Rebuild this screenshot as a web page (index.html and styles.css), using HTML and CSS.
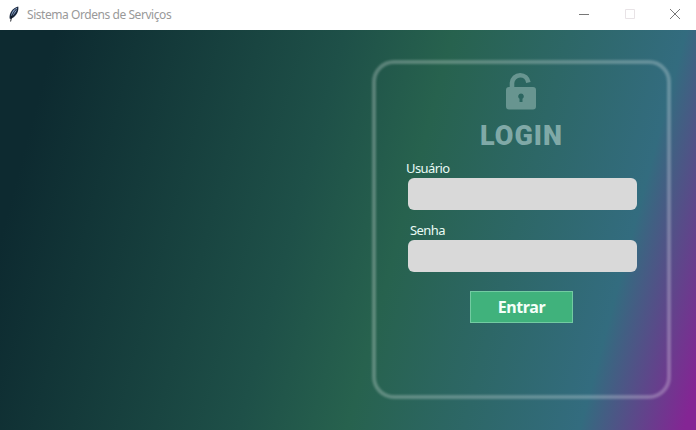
FILE: index.html
```html
<!DOCTYPE html>
<html lang="pt-BR">
<head>
<meta charset="utf-8">
<title>Sistema Ordens de Serviços</title>
<link rel="stylesheet" href="styles.css">
</head>
<body>
<header class="titlebar">
  <svg class="feather" width="12" height="16" viewBox="0 0 12 16">
    <path d="M1.600 12.500C1 7 4.500 2.200 10.200.6c.8 3.200-.9 8.200-4.800 11L2.600 13z" fill="#18253a"/>
    <path d="M3.200 10C3.300 6.500 5.500 3.200 9.200 1.800 9 5 7 7.500 4.800 9.500z" fill="#86a3cc"/>
    <path d="M8.500 3C5.500 6 3.500 9.500 2.600 15.500" fill="none" stroke="#0b0e16" stroke-width=".9"/>
  </svg>
  <h1 class="title">Sistema Ordens de Serviços</h1>
  <div class="controls">
    <svg width="12" height="12" viewBox="0 0 12 12"><path d="M1 6.500h10" stroke="#777"/></svg>
    <svg width="12" height="12" viewBox="0 0 12 12"><path d="M1.500 1.500h9v9h-9z" fill="none" stroke="#e8e3e6"/></svg>
    <svg width="12" height="12" viewBox="0 0 12 12"><path d="M1 1l10 10M11 1L1 11" stroke="#777"/></svg>
  </div>
</header>
<main class="screen">
  <form class="card">
    <svg class="lock" width="32" height="38" viewBox="0 0 32 38">
      <path d="M7 17V11a8.200 8.200 0 0 1 8.200-7.700c4.300 0 7.500 3 8.200 7.200" fill="none" stroke="currentColor" stroke-width="4.600"/>
      <path fill="currentColor" fill-rule="evenodd" d="M4 15h24a3 3 0 0 1 3 3v16.500a3 3 0 0 1-3 3H4a3 3 0 0 1-3-3V18a3 3 0 0 1 3-3zM16 21.500a2.900 2.900 0 0 0-1.500 5.300V30h3v-3.200A2.900 2.900 0 0 0 16 21.500z"/>
    </svg>
    <h2 class="heading">LOGIN</h2>
    <label class="label" for="user">Usuário</label>
    <input class="field" id="user" type="text">
    <label class="label label-password" for="password">Senha</label>
    <input class="field" id="password" type="password">
    <button class="submit" type="button">Entrar</button>
  </form>
</main>
</body>
</html>
```
FILE: styles.css
```css
* { box-sizing: border-box; }
body {
  margin: 0;
  height: 430px;
  display: flex;
  flex-direction: column;
  overflow: hidden;
  font-family: "Noto Sans", sans-serif;
}
.titlebar {
  height: 30px;
  flex: none;
  display: flex;
  align-items: center;
  padding: 0 15px 0 8px;
  background: #fff;
}
.feather { margin-top: -3px; }
.title {
  margin: 0 0 0 7px;
  font-size: 12px;
  font-weight: 400;
  line-height: 30px;
  letter-spacing: -0.44px;
  color: #999;
}
.controls {
  display: flex;
  gap: 33.500px;
  margin-left: auto;
  margin-top: -2px;
}
.controls svg { display: block; }
.screen {
  flex: 1;
  display: flex;
  justify-content: flex-end;
  align-items: flex-start;
  padding: 30px 25px 0 0;
  background: linear-gradient(105deg, #0d2a30 7%, #1e5048 43%, #27624e 56.500%, #336c7f 85.500%, #842594 98.500%);
}
.card {
  position: relative;
  width: 299px;
  height: 339px;
  padding: 12px 34px 0 36px;
  display: flex;
  flex-direction: column;
  align-items: flex-start;
}
.card::before {
  content: "";
  position: absolute;
  inset: 0;
  border: 4.500px solid rgba(255, 255, 255, 0.26);
  border-radius: 22px;
  filter: blur(1px);
  pointer-events: none;
}
.lock {
  display: block;
  margin-left: 97px;
  color: #689590;
}
.heading {
  margin: 8px 0 -1px 72px;
  font-family: Roboto, sans-serif;
  font-size: 27px;
  line-height: 36px;
  font-weight: 900;
  letter-spacing: 1px;
  color: #80a9a7;
}
.label {
  margin: 6px 0 0 -2px;
  height: 19px;
  font-size: 13px;
  line-height: 19px;
  letter-spacing: -0.6px;
  color: #e8fbf5;
}
.label-password {
  margin: 11px 0 0 2px;
}
.field {
  width: 229px;
  height: 32px;
  border: 0;
  border-radius: 6px;
  background: #d9d9d9;
  padding: 0 8px;
}
.submit {
  width: 103px;
  height: 32px;
  margin: 19px 0 0 62px;
  padding: 0;
  border: 1px solid #72cba2;
  background: #40b27c;
  color: #f4fff9;
  font: 700 16px/28px "Noto Sans", sans-serif;
  letter-spacing: -0.4px;
}
```
